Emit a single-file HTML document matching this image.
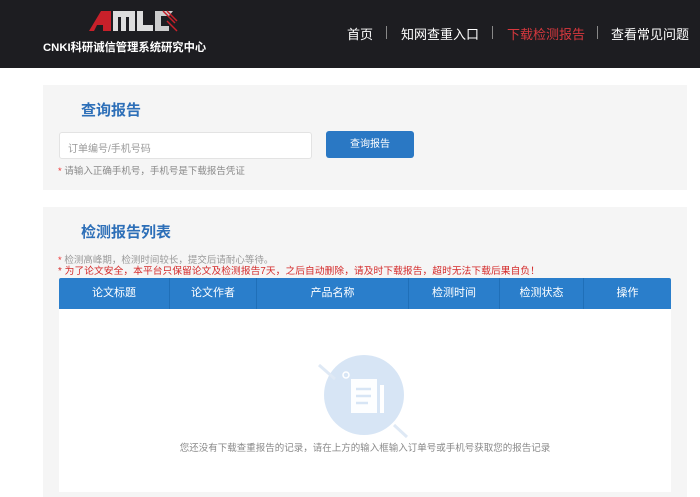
<!DOCTYPE html>
<html><head><meta charset="utf-8"><style>
*{margin:0;padding:0;box-sizing:border-box}
body{width:700px;height:497px;overflow:hidden;background:#fff;font-family:"Liberation Sans","Noto Sans CJK SC",sans-serif;position:relative}
.hdr{position:absolute;left:0;top:0;width:700px;height:68px;background:#1d1d21}
.brand{position:absolute;left:43px;top:39px;color:#fff;font-size:11.3px;font-weight:bold;white-space:nowrap}
.nav{position:absolute;top:24px;font-size:13px;color:#fff;white-space:nowrap}
.sep{position:absolute;top:26px;width:1px;height:13px;background:#888}
.p{position:absolute;left:43px;width:644px;background:#f5f5f5}
.t{position:absolute;color:#2d6fb8;font-size:15px;font-weight:bold}
</style></head><body>
<div class="hdr">
<svg style="position:absolute;left:83px;top:9px" width="96" height="24" viewBox="0 0 96 24">
<polygon points="6,22 18,2 28,2 28,22 20,22 20,16 14,16 11,22" fill="#c8202a"/>
<polygon points="30,2 52,2 52,22 46,22 46,8 43,8 43,22 38,22 38,8 35,8 35,22 30,22" fill="#ddd"/>
<polygon points="54,2 60,2 60,16 70,16 70,22 54,22" fill="#ddd"/>
<polygon points="72,2 90,2 86,7 78,7 78,17 86,17 86,22 72,22" fill="#ccc"/>
<g stroke="#c8202a" stroke-width="1.5"><line x1="80" y1="2" x2="92" y2="14"/><line x1="84" y1="2" x2="94" y2="12"/><line x1="84" y1="12" x2="94" y2="22"/></g>
</svg>
<div class="brand">CNKI科研诚信管理系统研究中心</div>
<div class="nav" style="left:347px">首页</div>
<div class="sep" style="left:386px"></div>
<div class="nav" style="left:401px">知网查重入口</div>
<div class="sep" style="left:492px"></div>
<div class="nav" style="left:507px;color:#d8383e">下载检测报告</div>
<div class="sep" style="left:597px"></div>
<div class="nav" style="left:611px">查看常见问题</div>
</div>

<div class="p" style="top:85px;height:105px">
<div class="t" style="left:38px;top:14px">查询报告</div>
<div style="position:absolute;left:16px;top:47px;width:253px;height:27px;background:#fff;border:1px solid #e3e3e3;border-radius:3px;font-size:10px;color:#999;padding:7px 8px">订单编号/手机号码</div>
<div style="position:absolute;left:283px;top:46px;width:88px;height:27px;background:#2a78c4;border-radius:3px;color:#fff;font-size:10px;text-align:center;line-height:27px">查询报告</div>
<div style="position:absolute;left:15px;top:78px;font-size:9.5px;color:#888"><span style="color:#e33">*</span> 请输入正确手机号，手机号是下载报告凭证</div>
</div>

<div class="p" style="top:207px;height:290px">
<div class="t" style="left:38px;top:14px">检测报告列表</div>
<div style="position:absolute;left:15px;top:45px;font-size:9.5px;color:#999"><span style="color:#e33">*</span> 检测高峰期，检测时间较长，提交后请耐心等待。</div>
<div style="position:absolute;left:15px;top:56px;font-size:9.7px;color:#d42a2a;white-space:nowrap;letter-spacing:0.1px">* 为了论文安全，本平台只保留论文及检测报告7天，之后自动删除，请及时下载报告，超时无法下载后果自负！</div>
<div style="position:absolute;left:16px;top:71px;width:612px;height:31px;background:#2a7ecb;color:#fff;font-size:11px;display:flex;border-radius:2px 2px 0 0">
<div style="width:111px;text-align:center;line-height:31px;border-right:1px solid #1f6fb8">论文标题</div>
<div style="width:87px;text-align:center;line-height:31px;border-right:1px solid #1f6fb8">论文作者</div>
<div style="width:152px;text-align:center;line-height:31px;border-right:1px solid #1f6fb8">产品名称</div>
<div style="width:91px;text-align:center;line-height:31px;border-right:1px solid #1f6fb8">检测时间</div>
<div style="width:84px;text-align:center;line-height:31px;border-right:1px solid #1f6fb8">检测状态</div>
<div style="flex:1;text-align:center;line-height:31px">操作</div>
</div>
<div style="position:absolute;left:16px;top:102px;width:612px;height:183px;background:#fff">
<svg style="position:absolute;left:250px;top:36px" width="110" height="100" viewBox="0 0 110 100">
<circle cx="55" cy="50" r="40" fill="#d7e5f5"/>
<rect x="42" y="34" width="26" height="34" fill="#fff" opacity=".95"/>
<g stroke="#d7e5f5" stroke-width="2.5"><line x1="47" y1="44" x2="62" y2="44"/><line x1="47" y1="51" x2="62" y2="51"/><line x1="47" y1="58" x2="59" y2="58"/></g>
<rect x="71" y="40" width="4" height="28" fill="#fff"/>
<g stroke="#dfe9f5" stroke-width="3"><line x1="10" y1="20" x2="26" y2="34"/><line x1="85" y1="80" x2="98" y2="92"/></g>
<circle cx="37" cy="30" r="3" fill="none" stroke="#fff" stroke-width="1.5"/>
</svg>
<div style="position:absolute;left:0;width:612px;top:131px;text-align:center;font-size:9.5px;color:#888">您还没有下载查重报告的记录，请在上方的输入框输入订单号或手机号获取您的报告记录</div>
</div>
</div>
</body></html>
